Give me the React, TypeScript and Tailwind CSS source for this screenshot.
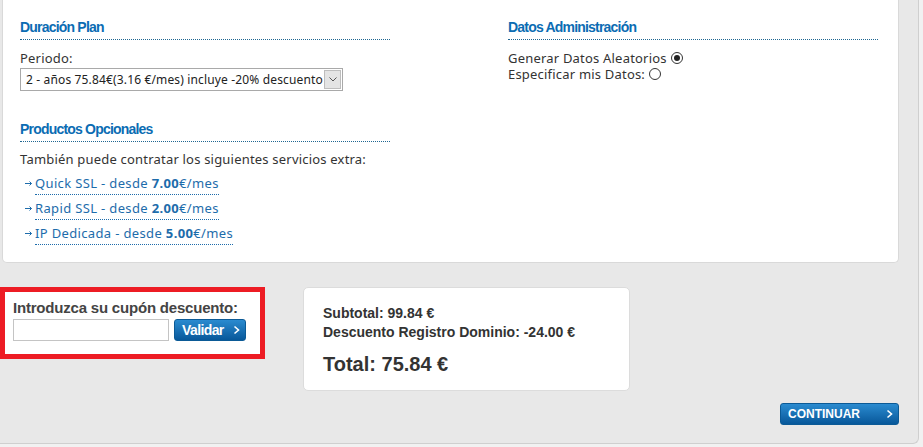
const body = { fontFamily: '"Noto Sans", "Open Sans", sans-serif' };
const arial = { fontFamily: '"Liberation Sans", Arial, sans-serif' };

function Heading({ children }: { children: string }) {
  return (
    <div
      style={arial}
      className="mt-[19px] h-[21px] border-b border-dotted border-[#1f6691] pb-[4px] text-[14px] font-bold leading-[16px] tracking-[-0.8px] text-[#0b6cb3]"
    >
      {children}
    </div>
  );
}

function Radio({ checked }: { checked?: boolean }) {
  return (
    <span className="ml-[4px] inline-flex h-[12px] w-[12px] items-center justify-center rounded-full border border-[#333] bg-white">
      {checked && <span className="h-[6px] w-[6px] rounded-full bg-[#222]"></span>}
    </span>
  );
}

function Chevron({ className }: { className?: string }) {
  return (
    <svg width="7" height="10" viewBox="0 0 7 10" className={className}>
      <path d="M1.5 1.5 L5.5 5 L1.5 8.5" fill="none" stroke="white" strokeWidth="1.6" />
    </svg>
  );
}

function OptionLink({ name, price }: { name: string; price: string }) {
  return (
    <div className="flex items-start text-[#1d6cab]">
      <svg width="15" height="16" viewBox="0 0 15 16" className="shrink-0">
        <path d="M5 8.5 H11.5 M9.5 6.5 L11.5 8.5 L9.5 10.5" fill="none" stroke="#1d6cab" strokeWidth="1" />
      </svg>
      <span className="inline-block border-b border-dotted border-[#1d6cab] pb-[3px] leading-[16px] tracking-[0.35px]">
        {name} - desde <b>{price}</b>€/mes
      </span>
    </div>
  );
}

export default function App() {
  return (
    <div className="h-[447px] w-[923px] overflow-hidden bg-[#f1f1f1]">
      <div className="h-[444px] w-[919px] rounded-br-[6px] border-b border-r border-[#cfcfcf] bg-[#e8e8e8]">
        {/* top panel */}
        <div
          style={body}
          className="ml-[2px] flex h-[263px] w-[897px] rounded-b-[5px] border border-t-0 border-[#d9d9d9] bg-white pl-[17px] text-[13px] tracking-[0.2px] text-[#333]"
        >
          <div className="w-[370px]">
            <Heading>Duración Plan</Heading>
            <div className="mt-[10px] leading-[16px]">Periodo:</div>
            <div className="mt-[2px] flex h-[23px] w-[323px] items-stretch border border-[#a9a9a9] bg-white">
              <span className="flex-1 whitespace-nowrap pl-[5px] text-[12px] leading-[21px] tracking-[0.15px] text-[#222]">
                2 - años 75.84€(3.16 €/mes) incluye -20% descuento
              </span>
              <span className="m-[1px] flex w-[17px] shrink-0 items-center justify-center border border-[#bdbdbd] bg-[#e4e4e4]">
                <svg width="8" height="5" viewBox="0 0 8 5">
                  <path d="M0.5 0.5 L4 4 L7.5 0.5" fill="none" stroke="#555" strokeWidth="1" />
                </svg>
              </span>
            </div>
            <div className="mt-[30px]">
              <Heading>Productos Opcionales</Heading>
            </div>
            <div className="mt-[9px] leading-[16px]">También puede contratar los siguientes servicios extra:</div>
            <div className="mt-[8px] flex flex-col gap-[5px]">
              <OptionLink name="Quick SSL" price="7.00" />
              <OptionLink name="Rapid SSL" price="2.00" />
              <OptionLink name="IP Dedicada" price="5.00" />
            </div>
          </div>
          <div className="ml-[118px] w-[370px]">
            <Heading>Datos Administración</Heading>
            <div className="mt-[10px] flex items-center leading-[16px]">
              Generar Datos Aleatorios <Radio checked />
            </div>
            <div className="flex items-center leading-[16px]">
              Especificar mis Datos: <Radio />
            </div>
          </div>
        </div>

        {/* bottom area */}
        <div className="mt-[24px] flex items-start">
          <div className="h-[72px] w-[265px] border-[5px] border-[#ed1c24] bg-white pl-[8px] pt-[7px]">
            <div style={arial} className="text-[15px] font-bold leading-[17px] tracking-[-0.2px] text-[#444]">
              Introduzca su cupón descuento:
            </div>
            <div className="mt-[3px] flex">
              <input className="h-[22px] w-[156px] border border-[#c4c4c4] bg-white outline-none" />
              <button
                style={arial}
                className="ml-[5px] flex h-[22px] w-[72px] items-center rounded-[3px] border border-[#0b5a96] bg-gradient-to-b from-[#2a8bd0] to-[#07589a] pl-[7px] text-[14px] font-bold tracking-[-0.6px] text-white"
              >
                Validar
                <Chevron className="ml-auto mr-[5px]" />
              </button>
            </div>
          </div>
          <div
            style={arial}
            className="ml-[38px] h-[104px] w-[327px] rounded-[5px] border border-[#dcdcdc] bg-white pl-[19px] pt-[16px] font-bold text-[#333]"
          >
            <div className="text-[14px] leading-[19px]">Subtotal: 99.84 €</div>
            <div className="text-[14px] leading-[19px]">Descuento Registro Dominio: -24.00 €</div>
            <div className="mt-[10px] text-[20px] leading-[24px]">Total: 75.84 €</div>
          </div>
        </div>
        <div className="mt-[12px] flex justify-end pr-[19px]">
          <button
            style={arial}
            className="flex h-[22px] w-[119px] items-center rounded-[3px] border border-[#0b5a96] bg-gradient-to-b from-[#2a8bd0] to-[#07589a] pl-[7px] text-[12px] font-bold text-white"
          >
            CONTINUAR
            <Chevron className="ml-auto mr-[5px]" />
          </button>
        </div>
      </div>
    </div>
  );
}
